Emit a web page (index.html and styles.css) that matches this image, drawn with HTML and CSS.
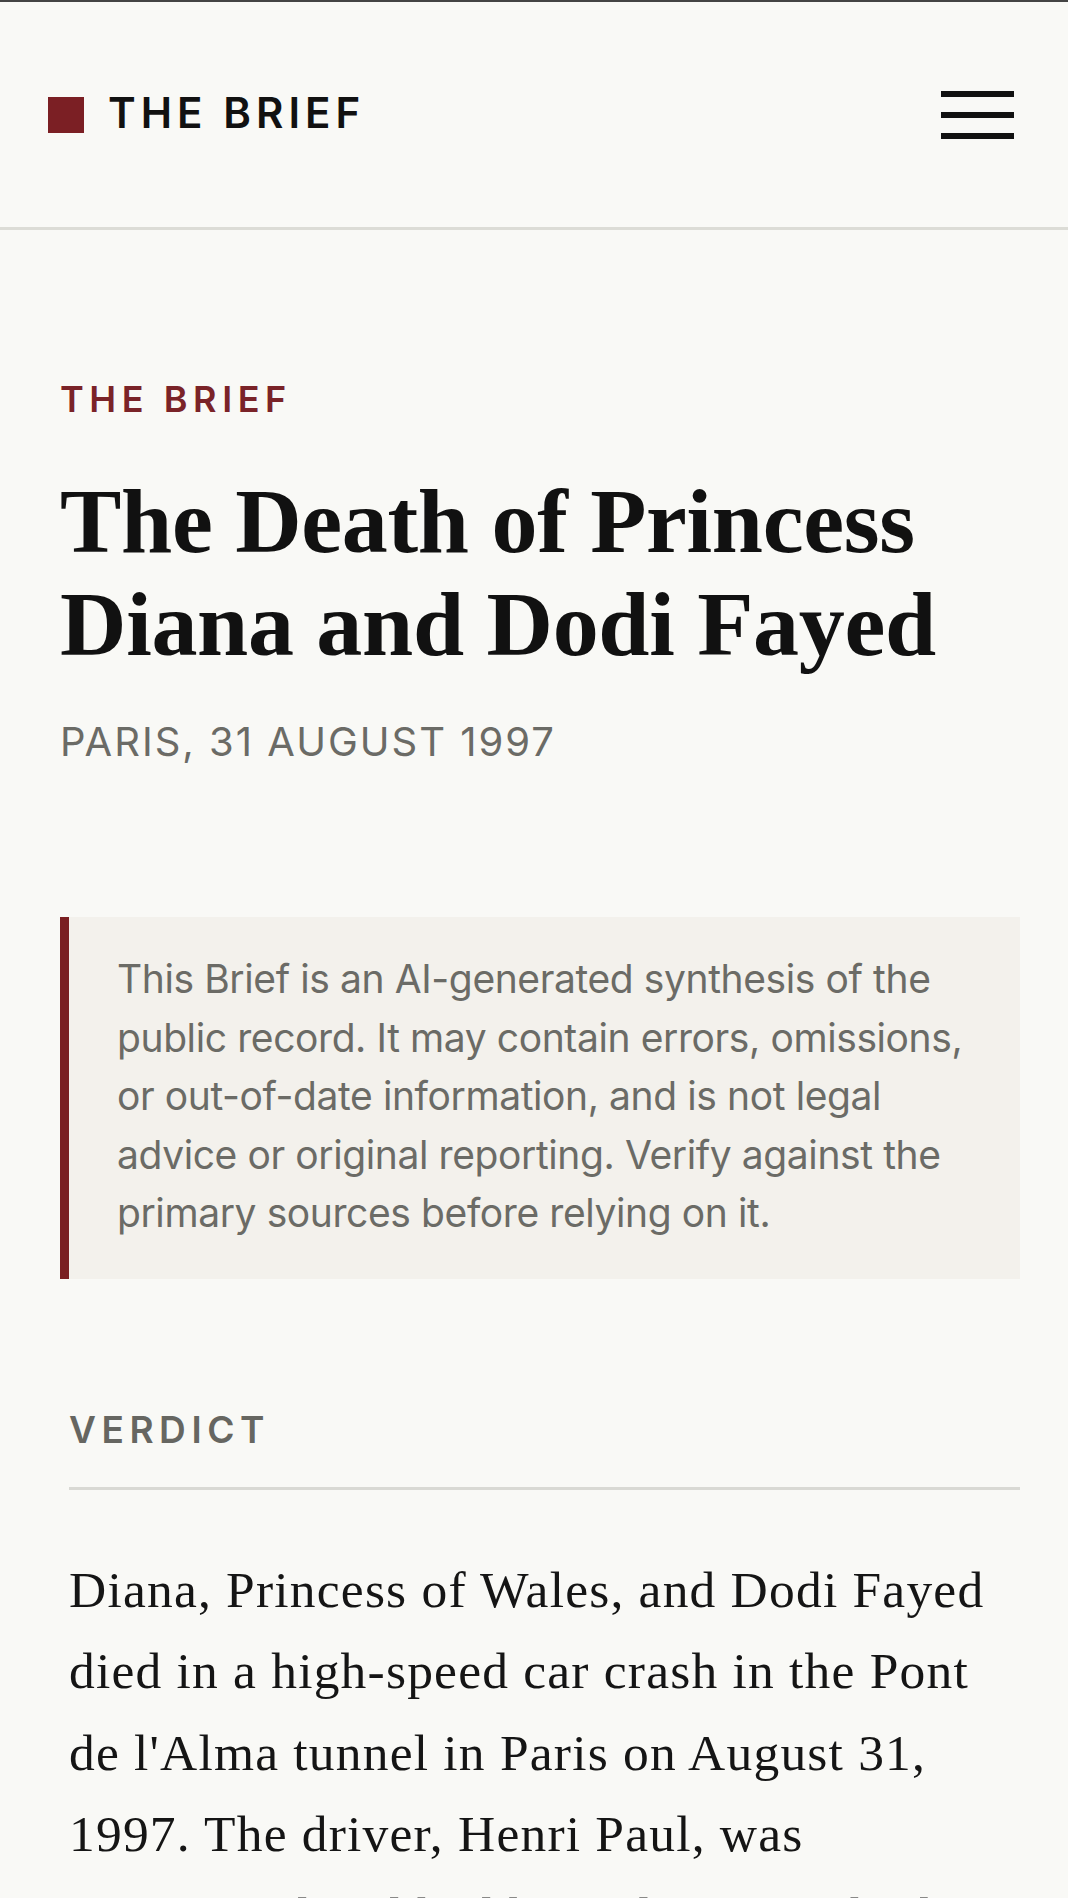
FILE: index.html
```html
<!DOCTYPE html>
<html lang="en">
<head>
<meta charset="utf-8">
<title>The Brief — The Death of Princess Diana and Dodi Fayed</title>
<link rel="stylesheet" href="styles.css">
</head>
<body>
<header class="site-header">
  <div class="brand">
    <span class="brand-mark"></span>
    <span class="brand-name">THE BRIEF</span>
  </div>
  <button class="menu-btn" aria-label="Menu">
    <span class="menu-bar"></span>
    <span class="menu-bar"></span>
    <span class="menu-bar"></span>
  </button>
</header>
<main class="article">
  <p class="kicker">THE BRIEF</p>
  <h1 class="title">The Death of Princess Diana and Dodi Fayed</h1>
  <p class="dateline">PARIS, 31 AUGUST 1997</p>
  <aside class="disclaimer">
    <p>This Brief is an AI-generated synthesis of the public record. It may contain errors, omissions, or out-of-date information, and is not legal advice or original reporting. Verify against the primary sources before relying on it.</p>
  </aside>
  <section class="verdict">
    <h2 class="section-heading">VERDICT</h2>
    <p class="body-text">Diana, Princess of Wales, and Dodi Fayed died in a high-speed car crash in the Pont de l'Alma tunnel in Paris on August 31, 1997. The driver, Henri Paul, was intoxicated and had been driving at high speed while pursued by photographers.</p>
  </section>
</main>
</body>
</html>
```
FILE: styles.css
```css
html, body {
  margin: 0;
  padding: 0;
}

body {
  background: #f9f9f6;
  color: #111111;
  font-family: "Inter", "Liberation Sans", sans-serif;
  border-top: 2px solid #444444;
}

/* Header */
.site-header {
  height: 228px;
  box-sizing: border-box;
  border-bottom: 3px solid #dcdcd6;
  display: flex;
  align-items: center;
  justify-content: space-between;
  padding: 0 54px 0 48px;
}

.brand {
  display: flex;
  align-items: center;
  gap: 24px;
}

.brand-mark {
  width: 36px;
  height: 36px;
  background: #7b1f24;
  display: block;
}

.brand-name {
  font-family: "Inter", sans-serif;
  font-weight: 600;
  font-size: 42px;
  letter-spacing: 0.12em;
  color: #111111;
  line-height: 1;
  position: relative;
  top: -2px;
}

.menu-btn {
  display: flex;
  flex-direction: column;
  gap: 15px;
  background: none;
  border: 0;
  padding: 0;
  margin: 0;
  cursor: pointer;
}

.menu-bar {
  display: block;
  width: 73px;
  height: 6px;
  background: #111111;
}

/* Article */
.article {
  padding: 148px 48px 0 60px;
}

.kicker {
  margin: 0;
  font-family: "Inter", sans-serif;
  font-weight: 600;
  font-size: 36px;
  line-height: 43px;
  letter-spacing: 0.155em;
  color: #7a2328;
}

.title {
  margin: 49px 0 0;
  font-family: "Liberation Serif", serif;
  font-weight: 700;
  font-size: 92px;
  line-height: 103px;
  letter-spacing: -0.3px;
  color: #111111;
}

.dateline {
  margin: 42px 0 0;
  font-family: "Inter", sans-serif;
  font-weight: 400;
  font-size: 40px;
  line-height: 48px;
  letter-spacing: 0.05em;
  color: #6b6b66;
}

.disclaimer {
  margin: 151px 0 0;
  background: #f3f1ec;
  border-left: 9px solid #7a1f22;
  padding: 33px 36px 36px 48px;
}

.disclaimer p {
  margin: 0;
  font-family: "Inter", sans-serif;
  font-size: 39px;
  line-height: 58.5px;
  letter-spacing: -0.4px;
  color: #6b6b66;
}

.verdict {
  margin-top: 129px;
  padding-left: 9px;
}

.section-heading {
  margin: 0;
  padding-bottom: 35px;
  border-bottom: 3px solid #d9d9d4;
  font-family: "Inter", sans-serif;
  font-weight: 600;
  font-size: 37px;
  line-height: 44px;
  letter-spacing: 0.15em;
  color: #666661;
}

.body-text {
  margin: 59px 0 0;
  font-family: "Liberation Serif", serif;
  font-size: 51.5px;
  line-height: 81.5px;
  letter-spacing: 1.2px;
  color: #151515;
}
```
